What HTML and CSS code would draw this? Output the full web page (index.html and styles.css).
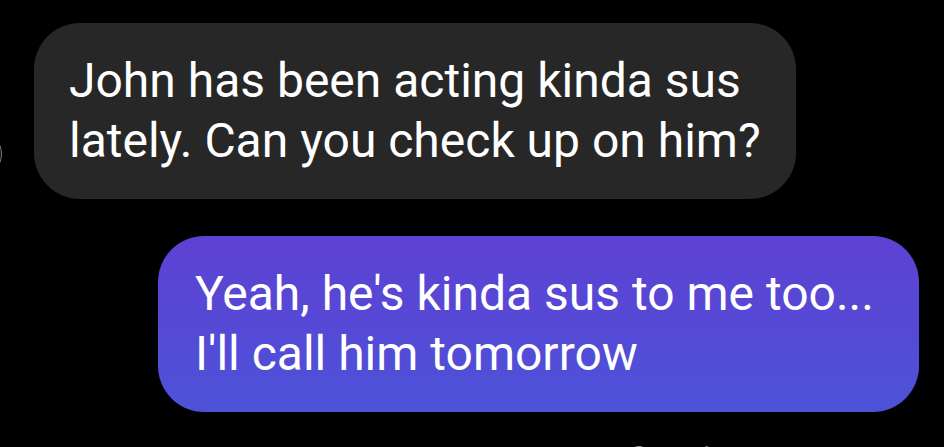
FILE: index.html
```html
<!DOCTYPE html>
<html lang="en">
<head>
  <meta charset="UTF-8">
  <meta name="viewport" content="width=device-width, initial-scale=1.0">
  <title>Chat</title>
  <link rel="stylesheet" href="styles.css">
</head>
<body>
  <div class="chat">
    <!-- Incoming -->
    <div class="row incoming">
      <div class="avatar"></div>
      <div class="bubble bubble-in">
        John has been acting kinda sus<br>
        lately. Can you check up on him?
      </div>
    </div>

    <!-- Outgoing -->
    <div class="row outgoing">
      <div class="bubble bubble-out">
        Yeah, he's kinda sus to me too...<br>
        I'll call him tomorrow
      </div>
    </div>

    <div class="status">Seen just now</div>
  </div>
</body>
</html>
```

FILE: styles.css
```css
html, body {
  margin: 0;
  background-color: #000;
  height: 100%;
  overflow: hidden;
}

body {
  font-family: 'Roboto', 'Liberation Sans', sans-serif;
  color: #fff;
}

.chat {
  display: flex;
  flex-direction: column;
  padding-top: 23px;
}

.row {
  display: flex;
}

.incoming {
  align-items: flex-end;
}

.outgoing {
  justify-content: flex-end;
  margin-top: 37px;
  padding-right: 25px;
}

.avatar {
  width: 44px;
  height: 44px;
  flex-shrink: 0;
  border-radius: 50%;
  border: 1px solid #7a7a7a;
  background-color: #111;
  margin-left: -44px;
  margin-right: 32px;
  margin-bottom: 22px;
}

.bubble {
  box-sizing: border-box;
  height: 176px;
  border-radius: 46px;
  font-size: 48px;
  line-height: 60px;
  padding-top: 28px;
}

.bubble-in {
  width: 762px;
  background-color: #272727;
  padding-left: 35px;
}

.bubble-out {
  width: 761px;
  background: linear-gradient(180deg, #5e41d2 0%, #4c52d8 100%);
  padding-left: 37px;
}

.status {
  align-self: flex-end;
  margin-right: 128px;
  margin-top: 27px;
  font-size: 30px;
  color: #9a9a9a;
}
```
